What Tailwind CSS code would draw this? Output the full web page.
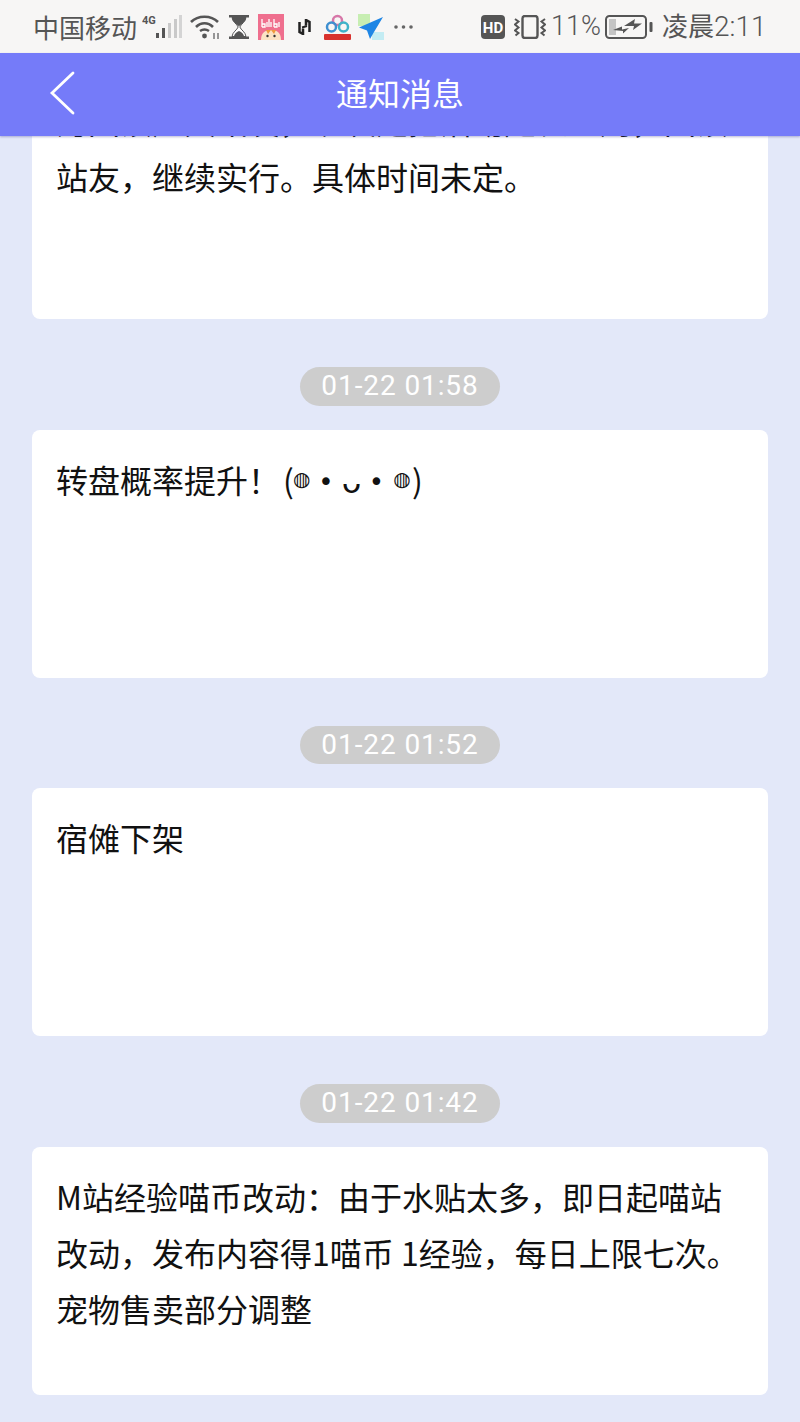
<!DOCTYPE html>
<html lang="zh-CN">
<head>
  <meta charset="UTF-8" />
  <title>通知消息</title>
  <meta name="viewport" content="width=device-width, initial-scale=1.0" />
  <script src="https://cdn.jsdelivr.net/npm/@tailwindcss/browser@4"></script>
</head>
<body class="bg-[#e3e8f9] font-['Noto_Sans_CJK_SC','Noto_Sans',sans-serif]">
  <div class="w-[800px] h-[1422px] flex flex-col overflow-hidden">

    <!-- status bar -->
    <div class="h-[53px] shrink-0 bg-[#f7f6f5] flex items-center text-[#555] text-[26px] leading-none">
      <span class="ml-[33px] w-[104px] shrink-0">中国移动</span>
      <svg class="ml-[5px] shrink-0" width="41" height="26" viewBox="0 0 41 26">
        <text x="0" y="10" font-size="11" font-weight="700" font-family="Roboto" fill="#555">4G</text>
        <rect x="14" y="19" width="3" height="5" fill="#555"/>
        <rect x="20" y="14" width="3" height="10" fill="#555"/>
        <rect x="26" y="9" width="3" height="15" fill="#c9c9c9"/>
        <rect x="32" y="5" width="3" height="19" fill="#c9c9c9"/>
        <rect x="37" y="1" width="3" height="23" fill="#d4d4d4"/>
      </svg>
      <svg class="ml-[7px] shrink-0" width="30" height="24" viewBox="0 0 30 24" fill="none" stroke="#555" stroke-width="2.6">
        <path d="M1 7C8 0 21 0 28 7"/>
        <path d="M6 12C11 7 18 7 23 12"/>
        <path d="M10 16C13 14 16 14 19 16"/>
        <circle cx="14.5" cy="21" r="2.4" fill="#555" stroke="none"/>
        <path d="M24 18v6M28 18v6" stroke-width="1.5" stroke="#777"/>
      </svg>
      <svg class="ml-[9px] shrink-0" width="20" height="24" viewBox="0 0 20 24">
        <rect x="0" y="0" width="20" height="2.5" fill="#555"/>
        <rect x="0" y="21.5" width="20" height="2.5" fill="#555"/>
        <path d="M3 2.500H17C16.500 7 12 9 10.800 12C12 15 16.500 17 17 21.500H3C3.500 17 8 15 9.200 12C8 9 3.500 7 3 2.500Z" fill="#fff" stroke="#555" stroke-width="1"/>
        <path d="M3 3H17C16.500 7 12 9 10 11.500C8 9 3.500 7 3 3Z" fill="#555"/>
        <path d="M5 21C6 18 8 17 10 16C12 17 14 18 15 21Z" fill="#555"/>
      </svg>
      <svg class="ml-[9px] shrink-0" width="26" height="26" viewBox="0 0 26 26">
        <rect width="26" height="26" fill="#ef6f8e"/>
        <path d="M4 5v8M4 10h3v3H4M9 8v5M11 5v8M13 8v5M16 5v8M16 10h3v3h-3M21 8v5" stroke="#fff" stroke-width="1.300" fill="none"/>
        <path d="M3 26C3 18 8 16 13 16C18 16 23 18 23 26Z" fill="#fbe3c4"/>
        <path d="M8 16l2 4 3-4 3 4 2-4" fill="#ef9a3d"/>
        <circle cx="9.500" cy="22" r="1.200" fill="#333"/>
        <circle cx="16.500" cy="22" r="1.200" fill="#333"/>
      </svg>
      <svg class="ml-[13px] shrink-0" width="15" height="16" viewBox="0 0 15 16" fill="none">
        <path d="M2.500 3V13L6 15V9.500" stroke="#222" stroke-width="2.500"/>
        <path d="M12.500 13V3L9 1V6.500" stroke="#222" stroke-width="2.500"/>
        <path d="M5 8.500L10 7" stroke="#222" stroke-width="2"/>
      </svg>
      <svg class="ml-[12px] shrink-0" width="27" height="26" viewBox="0 0 27 26" fill="none">
        <circle cx="13.500" cy="6.500" r="4.500" stroke="#d777a8" stroke-width="2.500"/>
        <circle cx="7.500" cy="13" r="4.500" stroke="#3f8fd0" stroke-width="2.500"/>
        <circle cx="19.500" cy="13" r="4.500" stroke="#3fb3c9" stroke-width="2.500"/>
        <rect x="0" y="20" width="27" height="6" rx="1" fill="#d8322e"/>
      </svg>
      <svg class="ml-[7px] shrink-0" width="26" height="26" viewBox="0 0 26 26">
        <rect width="12" height="12" fill="#c7eeb2"/>
        <rect x="14" y="18" width="12" height="8" fill="#c3ecf3"/>
        <path d="M25 3L1 13.500L9 16.500L12 25L16 18Z" fill="#1f86e5"/>
      </svg>
      <svg class="ml-[10px] shrink-0" width="19" height="4" viewBox="0 0 19 4" fill="#666">
        <circle cx="2" cy="2" r="1.800"/>
        <circle cx="9.500" cy="2" r="1.800"/>
        <circle cx="17" cy="2" r="1.800"/>
      </svg>
      <svg class="ml-[68px] shrink-0" width="24" height="24" viewBox="0 0 24 24">
        <rect width="24" height="24" rx="4" fill="#555"/>
        <text x="12" y="17.500" text-anchor="middle" font-size="15" font-weight="700" font-family="Roboto" fill="#fff">HD</text>
      </svg>
      <svg class="ml-[9px] shrink-0" width="32" height="24" viewBox="0 0 32 24" fill="none" stroke="#555">
        <rect x="8.500" y="1" width="15" height="22" rx="2.500" stroke-width="2.400"/>
        <path d="M1 4l3.500 2.500-3.500 3 3.500 3-3.500 3 3.500 2.500-3 2.500" stroke-width="2"/>
        <path d="M31 4l-3.500 2.500 3.500 3-3.500 3 3.500 3-3.500 2.500 3 2.500" stroke-width="2"/>
      </svg>
      <span class="ml-[5px] w-[49px] shrink-0 text-[27px] font-['Roboto'] font-light">11%</span>
      <svg class="ml-[5px] shrink-0" width="48" height="24" viewBox="0 0 48 24" fill="none">
        <rect x="1" y="1" width="40" height="22" rx="3.500" stroke="#555" stroke-width="2"/>
        <rect x="4" y="4" width="7" height="16" fill="#c4c4c4"/>
        <rect x="44.500" y="7" width="3" height="10" rx="1" fill="#555"/>
        <path d="M8 15L17 11.500L17 14.500L24 13L18 18.500L18 16Z" fill="#555"/>
        <path d="M19 11L30 4L29 8.500L37 8.500L28 15L29 11Z" fill="#555"/>
      </svg>
      <span class="ml-[9px] shrink-0">凌晨<span class="font-['Roboto'] font-light text-[28px]">2:11</span></span>
    </div>

    <!-- header -->
    <div class="h-[83px] shrink-0 bg-[#757bf9] flex items-center relative z-10 shadow-[0_1px_2px_rgba(60,60,140,0.35)]">
      <svg class="ml-[49px] mb-[3px] shrink-0" width="26" height="44" viewBox="0 0 26 44" fill="none" stroke="#fff" stroke-width="2.800" stroke-linecap="round">
        <path d="M24 2L3 22L24 42"/>
      </svg>
      <div class="w-[800px] ml-[-75px] mb-[5px] text-center text-white text-[32px] leading-none">通知消息</div>
    </div>

    <!-- scrolled list -->
    <div class="flex-1 min-h-0 overflow-hidden">
      <div class="mt-[-65px] flex flex-col items-center">

        <div class="w-[736px] h-[248px] bg-white rounded-lg px-6 pt-[21px] text-[32px] leading-[56px] text-[#111]">
          为回馈广大站友，现决定把活动延长一周，回馈<br />站友，继续实行。具体时间未定。
        </div>

        <div class="mt-12 mb-6 w-[200px] h-[38.5px] rounded-full bg-[#cdcdcd] text-white text-[28px] leading-[38.5px] text-center font-['Roboto'] tracking-[0.9px]">01-22 01:58</div>
        <div class="w-[736px] h-[248px] bg-white rounded-lg px-6 pt-[21px] text-[32px] leading-[56px] text-[#111]">
          <div class="flex h-[56px] items-center">
            <span>转盘概率提升！</span>
            <span class="ml-[3px] w-[10px] text-center leading-none">(</span>
            <span class="w-[14px] text-center text-[20px] leading-none font-['DejaVu_Sans']">◍</span>
            <span class="ml-[6px] pt-[6px] w-[26px] text-center text-[26px] leading-none font-['DejaVu_Sans']">•</span>
            <span class="pt-[6px] w-[25px] text-center leading-none font-['DejaVu_Sans']">ᴗ</span>
            <span class="pt-[6px] w-[25px] text-center text-[26px] leading-none font-['DejaVu_Sans']">•</span>
            <span class="w-[26px] text-center text-[20px] leading-none font-['DejaVu_Sans']">◍</span>
            <span class="ml-[-3px] w-[10px] text-center leading-none">)</span>
          </div>
        </div>

        <div class="mt-12 mb-6 w-[200px] h-[38.5px] rounded-full bg-[#cdcdcd] text-white text-[28px] leading-[38.5px] text-center font-['Roboto'] tracking-[0.9px]">01-22 01:52</div>
        <div class="w-[736px] h-[248px] bg-white rounded-lg px-6 pt-[21px] text-[32px] leading-[56px] text-[#111]">
          宿傩下架
        </div>

        <div class="mt-12 mb-6 w-[200px] h-[38.5px] rounded-full bg-[#cdcdcd] text-white text-[28px] leading-[38.5px] text-center font-['Roboto'] tracking-[0.9px]">01-22 01:42</div>
        <div class="w-[736px] h-[248px] bg-white rounded-lg px-6 pt-[21px] text-[32px] leading-[56px] text-[#111]">
          M站经验喵币改动：由于水贴太多，即日起喵站<br />改动，发布内容得1喵币 1经验，每日上限七次。<br />宠物售卖部分调整
        </div>

      </div>
    </div>
  </div>
</body>
</html>
